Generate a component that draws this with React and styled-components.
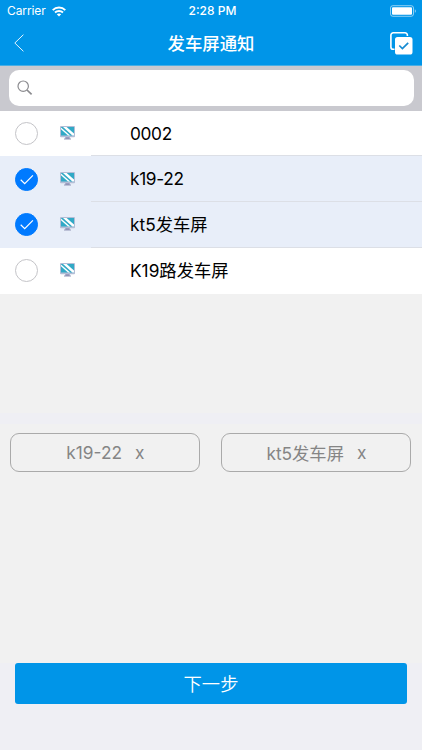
import React from 'react';
import styled, { createGlobalStyle } from 'styled-components';

const GlobalStyle = createGlobalStyle`
    * {
        box-sizing: border-box;
    }
    body {
        margin: 0;
        font-family: Inter, "Noto Sans CJK SC", sans-serif;
    }
    button {
        padding: 0;
        border: 0;
        background: none;
        font-family: inherit;
    }
    svg {
        display: block;
    }
`
const Screen = styled.div`
    display: flex;
    flex-direction: column;
    width: 422px;
    height: 750px;
    overflow: hidden;
    background: #efeff4;
`
const Header = styled.header`
    height: 66px;
    flex: none;
    color: white;
    background: #0095e8;
    border-bottom: 1px solid #48aee4;
`
const StatusBar = styled.div`
    display: grid;
    grid-template-columns: 1fr auto 1fr;
    align-items: center;
    height: 22px;
    padding: 0 5px 0 7px;
    font-size: 12px;
    line-height: 22px;
`
const Carrier = styled.div`
    display: flex;
    align-items: center;
    gap: 6px;
    letter-spacing: -0.1px;
`
const Time = styled.div`
    font-weight: 500;
    padding-left: 1px;
`
const BatteryBox = styled.div`
    justify-self: end;
    margin-top: -1px;
`
const NavBar = styled.div`
    display: grid;
    grid-template-columns: 60px 1fr 60px;
    align-items: center;
    height: 43px;
`
const BackButton = styled.button`
    padding: 0 0 1px 14px;
`
const SelectButton = styled.button`
    justify-self: end;
    padding-right: 9px;
`
const Title = styled.h1`
    margin: 0;
    font-size: 17.4px;
    font-weight: 500;
    line-height: 42px;
    text-align: center;
`
const SearchBar = styled.div`
    flex: none;
    height: 44.5px;
    padding: 3.5px 8.5px 4.5px 8.5px;
    background: #c9c9cf;
`
const SearchField = styled.label`
    display: flex;
    align-items: center;
    height: 36.5px;
    padding-left: 8px;
    border-radius: 10px;
    background: white;
`
const SearchInput = styled.input`
    flex: 1;
    border: 0;
    outline: none;
    background: none;
    font-size: 16px;
`
const List = styled.div`
    flex: none;
    height: 302.5px;
    background: #f1f1f1;
`
const Row = styled.div`
    display: flex;
    align-items: center;
    height: 45.75px;
    padding-left: 15px;
    background: ${props => props.$selected ? '#e8eef9' : 'white'};
`
const Radio = styled.div`
    display: flex;
    align-items: center;
    justify-content: center;
    width: 23px;
    height: 23px;
    border-radius: 50%;
    border: 1px solid ${props => props.$selected ? '#007aff' : '#c4c4c8'};
    background: ${props => props.$selected ? '#007aff' : 'white'};
`
const IconBox = styled.div`
    margin: -1px 16px 0 22px;
`
const RowText = styled.div`
    flex: 1;
    align-self: stretch;
    padding-left: 39px;
    border-bottom: ${props => props.$last ? '0' : '1px solid #dcdfe6'};
    color: black;
    font-size: 17.3px;
    line-height: 46.5px;
    letter-spacing: ${props => props.$tight ? '-0.35px' : '0'};
`
const Chips = styled.div`
    display: grid;
    grid-template-columns: 190px 190px;
    column-gap: 21px;
    align-items: start;
    flex: none;
    height: 239px;
    margin-top: 11px;
    padding: 9px 0 0 10.4px;
    background: #f1f1f1;
`
const Chip = styled.button`
    display: flex;
    align-items: center;
    justify-content: center;
    gap: 13px;
    height: 38.5px;
    border: 1px solid #aaa;
    border-radius: 9px;
    color: #858585;
    font-size: 17.3px;
`
const NextButton = styled.button`
    flex: none;
    height: 41px;
    margin: 0 15.4px;
    padding-bottom: 1px;
    border-radius: 3px;
    color: white;
    background: #0095e8;
    font-size: 18.3px;
    font-weight: 350;
`

function WifiIcon() {
    return (
        <svg width="14" height="11" viewBox="0 0 14 11" fill="none" stroke="white" strokeWidth="1.9">
            <path d="M0.7 4.1C4.2 .7 9.8 .7 13.3 4.1" />
            <path d="M3 6.5C5.2 4.4 8.8 4.4 11 6.5" />
            <path d="M7 10.5L4.8 8.3C6 7.1 8 7.1 9.2 8.3Z" fill="white" stroke="none" />
        </svg>
    )
}

function BatteryIcon() {
    return (
        <svg width="27" height="12" viewBox="0 0 27 12" fill="none">
            <rect x="0.5" y="0.7" width="23" height="10.6" rx="2.3" stroke="white" strokeOpacity=".55" />
            <rect x="2" y="2.2" width="20" height="7.6" rx="1" fill="white" />
            <path d="M24.8 4.2C26.3 4.6 26.3 7.4 24.8 7.8Z" fill="white" fillOpacity=".55" />
        </svg>
    )
}

function BackIcon() {
    return (
        <svg width="10" height="18" viewBox="0 0 10 18" fill="none" stroke="white" strokeWidth="0.9">
            <path d="M9.4 .7L.8 9L9.4 17.3" />
        </svg>
    )
}

function SelectIcon() {
    return (
        <svg width="23" height="23" viewBox="0 0 23 23" fill="none">
            <path d="M4.5 17.3H3.3A2.4 2.4 0 0 1 .9 14.9V3.2A2.4 2.4 0 0 1 3.3 .8H15A2.4 2.4 0 0 1 17.4 3.2V4" stroke="white" strokeWidth="1.6" />
            <rect x="5" y="5" width="17.5" height="17.5" rx="2.6" fill="white" />
            <path d="M9.3 13.5L12.4 16.5L18.2 10.8" stroke="#168bd2" strokeWidth="1.7" />
        </svg>
    )
}

function SearchIcon() {
    return (
        <svg width="16" height="16" viewBox="0 0 16 16" fill="none" stroke="#8b8b8f">
            <circle cx="6.2" cy="6.2" r="5.2" strokeWidth="1.2" />
            <path d="M10 10L14.6 14.4" strokeWidth="1.7" />
        </svg>
    )
}

function CheckIcon() {
    return (
        <svg width="14" height="11" viewBox="0 0 14 11" fill="none" stroke="white" strokeWidth="1.2">
            <path d="M.7 5.7L4.7 9.6L12.9 1.4" />
        </svg>
    )
}

function ScreenIcon() {
    return (
        <svg width="15" height="14" viewBox="0 0 15 14">
            <path d="M5.3 11H9.7V12.5H11V13.5H4V12.5H5.3Z" fill="#9295b8" />
            <rect x="0" y="0" width="15" height="11.2" rx="1" fill="#b4bdd6" />
            <rect x="1" y="1" width="13" height="8.5" fill="#31a9c6" />
            <path d="M1 1.4V3.2L8 9.5H10.2Z" fill="white" />
            <path d="M3 1H6.6L14 7.6V9.5H12.4Z" fill="white" />
        </svg>
    )
}

const screens = [
    { name: '0002', selected: false },
    { name: 'k19-22', selected: true },
    { name: 'kt5发车屏', selected: true },
    { name: 'K19路发车屏', selected: false },
]

// names made only of latin characters are set slightly tighter
const isLatin = name => /^[\w-]+$/.test(name)

export default function App() {
    return (
        <Screen>
            <GlobalStyle />
            <Header>
                <StatusBar>
                    <Carrier>Carrier <WifiIcon /></Carrier>
                    <Time>2:28 PM</Time>
                    <BatteryBox><BatteryIcon /></BatteryBox>
                </StatusBar>
                <NavBar>
                    <BackButton><BackIcon /></BackButton>
                    <Title>发车屏通知</Title>
                    <SelectButton><SelectIcon /></SelectButton>
                </NavBar>
            </Header>
            <SearchBar>
                <SearchField>
                    <SearchIcon />
                    <SearchInput />
                </SearchField>
            </SearchBar>
            <List>
                {screens.map((item, index) => (
                    <Row key={item.name} $selected={item.selected}>
                        <Radio $selected={item.selected}>{item.selected && <CheckIcon />}</Radio>
                        <IconBox><ScreenIcon /></IconBox>
                        <RowText $tight={isLatin(item.name)} $last={index === screens.length - 1}>{item.name}</RowText>
                    </Row>
                ))}
            </List>
            <Chips>
                {screens.filter(item => item.selected).map(item => (
                    <Chip key={item.name}>
                        <span>{item.name}</span>
                        <span>x</span>
                    </Chip>
                ))}
            </Chips>
            <NextButton>下一步</NextButton>
        </Screen>
    )
}
